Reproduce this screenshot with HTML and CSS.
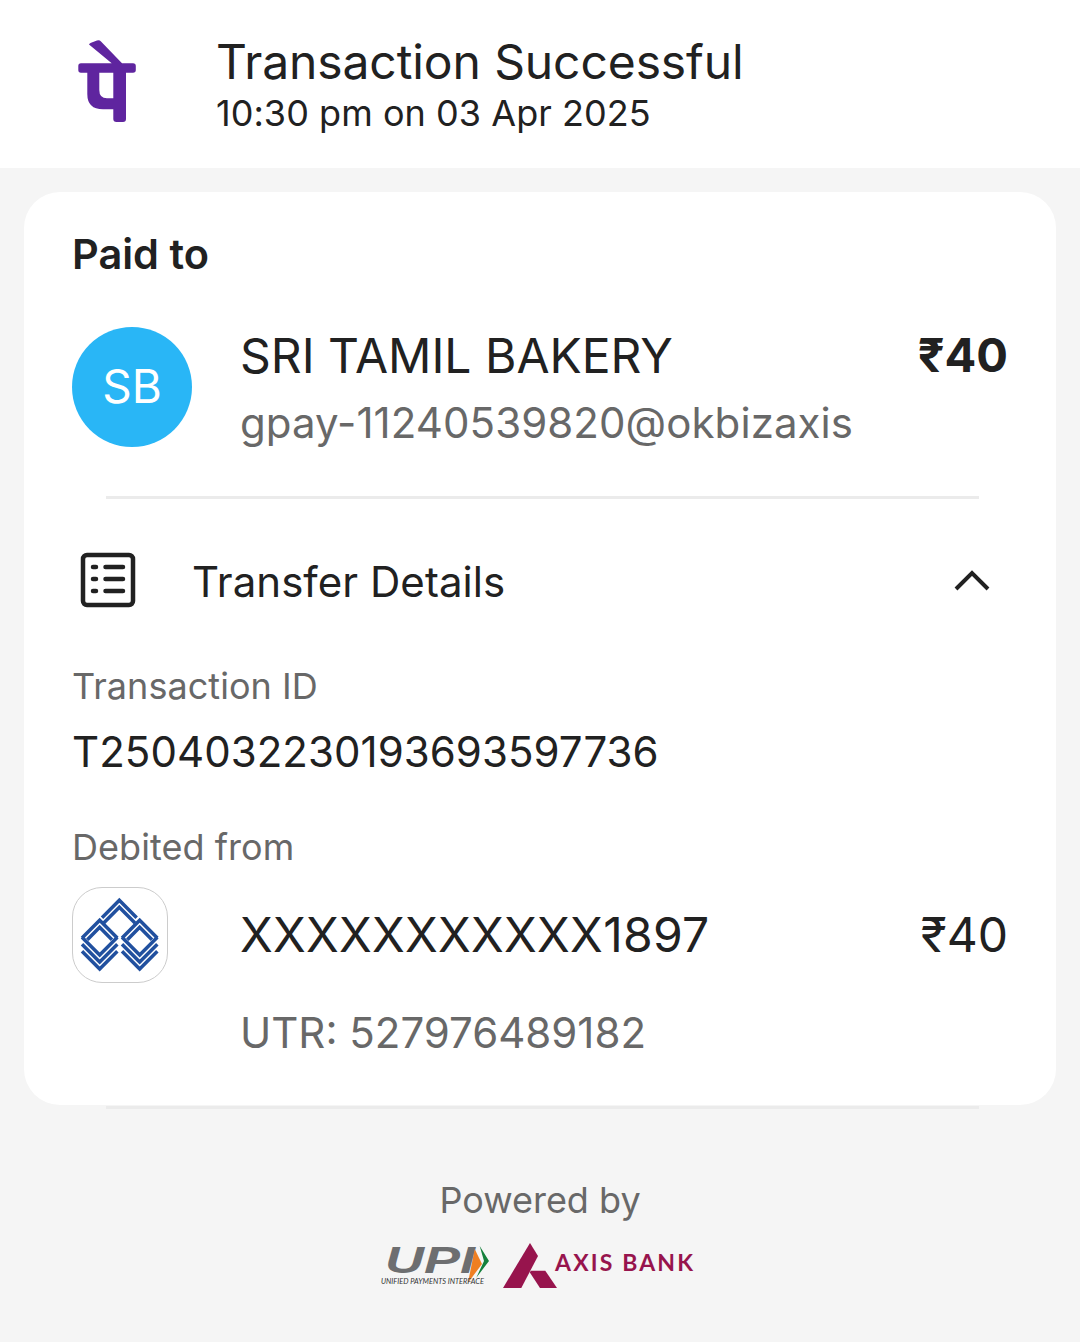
FILE: index.html
```html
<!DOCTYPE html>
<html lang="en">
<head>
  <meta charset="UTF-8">
  <meta name="viewport" content="width=device-width, initial-scale=1.0">
  <title>Transaction Successful</title>
  <link rel="stylesheet" href="styles.css">
</head>
<body>
  <!-- Top bar -->
  <div class="header">
    <svg class="brand" width="58" height="84" viewBox="0 0 58 84">
      <path d="M11 4.500 Q11.500 3.300 13 2.800 L19 0.500 Q21.500 -0.300 23 1.500 L44 23.300 H55 Q57.800 23.300 57.800 26 V30 Q57.800 32.700 55 32.700 H48 V79 Q48 82 45 82 H38.500 Q35.300 82 35.300 79 V69.300 H25 Q9.300 69.300 9.300 54 V32.700 H3 Q0.300 32.700 0.300 30 V26 Q0.300 23.300 3 23.300 H33.700 Z M21.300 32.700 V50 Q21.300 58.300 29 58.300 H35.300 V32.700 Z" fill="#5f259f" fill-rule="evenodd"/>
    </svg>
    <div class="header-text">
      <div class="title">Transaction Successful</div>
      <div class="time">10:30 pm on 03 Apr 2025</div>
    </div>
  </div>

  <div class="card">
    <div class="paid-label">Paid to</div>

    <div class="payee">
      <div class="avatar">SB</div>
      <div class="payee-info">
        <div class="payee-name">SRI TAMIL BAKERY</div>
        <div class="payee-upi">gpay-11240539820@okbizaxis</div>
      </div>
      <div class="amount">₹40</div>
    </div>

    <div class="divider"></div>

    <div class="details-head">
      <svg class="details-icon" width="56" height="56" viewBox="0 0 56 56">
        <rect x="3" y="3" width="50" height="50" rx="4" fill="none" stroke="#212121" stroke-width="4.500"/>
        <path d="M13 15 H16 M13 27 H16 M13 39 H16 M25.500 15 H43 M25.500 27 H43 M25.500 39 H43" fill="none" stroke="#212121" stroke-width="4.500" stroke-linecap="round"/>
      </svg>
      <div class="details-title">Transfer Details</div>
      <svg class="chevron" width="36" height="22" viewBox="0 0 36 22">
        <path d="M2 20 L18 4 L34 20" fill="none" stroke="#212121" stroke-width="4"/>
      </svg>
    </div>

    <div class="field-label">Transaction ID</div>
    <div class="txn-id">T2504032230193693597736</div>

    <div class="field-label debit-label">Debited from</div>
    <div class="debit">
      <div class="bank-logo">
        <svg width="84" height="80" viewBox="0 0 252 240">
          <g fill="none" stroke="#21509f" stroke-width="10.500">
            <path d="M72 68 L124 16 L176 68"/>
            <path d="M77 84 L124 37 L171 84"/>
            <g id="bank-diamond">
              <path d="M12 129 L65 76 L118 129"/>
              <path d="M28 134 L65 97 L102 134"/>
              <path d="M12 127 L65 180 L118 127"/>
              <path d="M12 148 L65 201 L118 148"/>
              <path d="M12 169 L65 222 L118 169"/>
            </g>
            <use href="#bank-diamond" x="120"/>
          </g>
        </svg>
      </div>
      <div class="account">XXXXXXXXXXX1897</div>
      <div class="debit-amount">₹40</div>
    </div>
    <div class="utr">UTR: 527976489182</div>
  </div>

  <div class="divider bottom-divider"></div>

  <!-- Footer logos -->
  <div class="footer">
    <div class="powered">Powered by</div>
    <div class="logos">
      <svg width="116" height="50" viewBox="0 0 116 50">
        <text x="7" y="34" class="upi-mark" textLength="90" lengthAdjust="spacingAndGlyphs">UPI</text>
        <path d="M101.700 7 L111 22 L98.300 38.700 L106 22 Z" fill="#14803c"/>
        <path d="M96.700 10 L104 25 L90 43.700 Z" fill="#ef7f22"/>
        <text x="3" y="45" class="upi-sub" textLength="103" lengthAdjust="spacingAndGlyphs">UNIFIED PAYMENTS INTERFACE</text>
      </svg>
      <svg width="200" height="52" viewBox="0 0 200 52">
        <path d="M32 4 L40 17 L23.300 49 H5 Z" fill="#97144d"/>
        <path d="M33 31.700 H47.300 L59 49 H42 L31.700 33.300 Z" fill="#97144d"/>
        <text x="57" y="32" class="axis-mark" textLength="138" lengthAdjust="spacing">AXIS BANK</text>
      </svg>
    </div>
  </div>
</body>
</html>
```

FILE: styles.css
```css
* {
  box-sizing: border-box;
}

body {
  margin: 0;
  min-height: 1342px;
  background-color: #f5f5f5;
  font-family: Inter, "Noto Sans", sans-serif;
  color: #212121;
}

/* Top bar */
.header {
  height: 168px;
  background-color: #fff;
  display: flex;
  align-items: center;
  padding-left: 78px;
}

.brand {
  flex: none;
  margin-top: -4px;
}

.header-text {
  margin-left: 80px;
}

.title {
  font-size: 48px;
  line-height: 58px;
  letter-spacing: -0.1px;
  margin-top: -1px;
}

.time {
  font-size: 36px;
  line-height: 44px;
  letter-spacing: 0.05px;
}

/* Main card */
.card {
  margin: 24px 24px 0;
  height: 913px;
  background-color: #fff;
  border-radius: 36px;
  padding: 38px 48px 0;
}

.paid-label {
  font-size: 41.5px;
  font-weight: 600;
  line-height: 48px;
}

.payee {
  display: flex;
  align-items: flex-start;
  margin-top: 49px;
}

.avatar {
  flex: none;
  width: 120px;
  height: 120px;
  padding-bottom: 2px;
  border-radius: 50%;
  background-color: #29b6f6;
  color: #fff;
  font-size: 46px;
  display: flex;
  align-items: center;
  justify-content: center;
}

.payee-info {
  flex: 1;
  margin-left: 48px;
}

.payee-name {
  font-size: 48px;
  line-height: 58px;
}

.payee-upi {
  font-size: 42px;
  line-height: 50px;
  letter-spacing: 0.07px;
  margin-top: 13px;
  color: #686868;
}

.amount {
  font-size: 47px;
  font-weight: 700;
  line-height: 56px;
}

.divider {
  height: 3px;
  background-color: #ebebeb;
  width: 873px;
}

.card .divider {
  margin: 48px 0 0 34px;
}

.bottom-divider {
  margin: 1px 0 0 106px;
}

/* Transfer details */
.details-head {
  display: flex;
  align-items: center;
  margin-top: 53px;
  height: 58px;
}

.details-icon {
  flex: none;
  margin: 0 0 2px 8px;
}

.details-title {
  flex: 1;
  margin-left: 56px;
  font-size: 42px;
  letter-spacing: 0.05px;
}

.chevron {
  flex: none;
  margin: 0 18px 2px 0;
}

.field-label {
  font-size: 36px;
  line-height: 44px;
  letter-spacing: 0.05px;
  color: #686868;
  margin-top: 54px;
}

.txn-id {
  font-size: 42px;
  line-height: 50px;
  letter-spacing: 0.05px;
  margin-top: 19px;
}

.debit-label {
  margin-top: 48px;
}

.debit {
  display: flex;
  align-items: center;
  margin-top: 18px;
}

.bank-logo {
  flex: none;
  width: 96px;
  height: 96px;
  border: 1px solid #ccc;
  border-radius: 30px;
  display: flex;
  align-items: center;
  justify-content: center;
}

.account {
  flex: 1;
  margin: 0 0 2px 72px;
  font-size: 48px;
  letter-spacing: 0.27px;
}

.debit-amount {
  font-size: 48px;
  margin-bottom: 2px;
}

.utr {
  margin: 25px 0 0 168px;
  font-size: 42px;
  line-height: 50px;
  color: #686868;
}

/* Footer */
.footer {
  text-align: center;
  margin-top: 69px;
}

.powered {
  font-size: 36px;
  line-height: 44px;
  color: #686868;
}

.logos {
  display: flex;
  justify-content: center;
  align-items: flex-start;
  gap: 4px;
  margin: 17px 4px 0 0;
}

.upi-mark {
  font-family: "Liberation Sans", sans-serif;
  font-size: 37px;
  font-weight: 700;
  font-style: italic;
  fill: #6d6e70;
}

.upi-sub {
  font-family: Lato, sans-serif;
  font-size: 7.5px;
  font-style: italic;
  fill: #333;
}

.axis-mark {
  font-family: Lato, sans-serif;
  font-size: 23px;
  font-weight: 700;
  fill: #97144d;
}
```
